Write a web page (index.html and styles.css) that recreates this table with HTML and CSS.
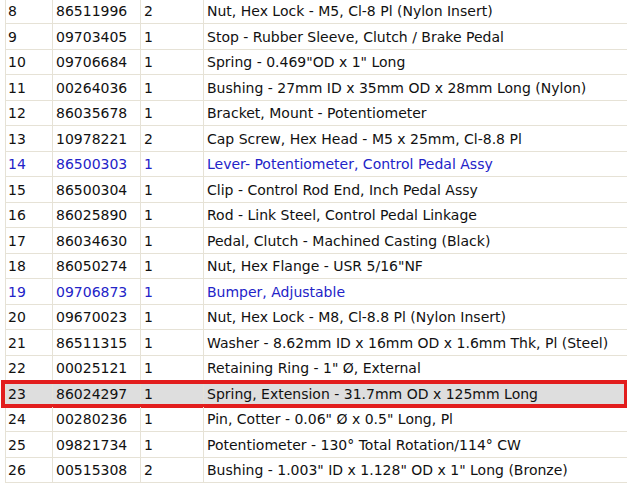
FILE: index.html
```html
<!DOCTYPE html>
<html>
<head>
<meta charset="utf-8">
<link rel="stylesheet" href="styles.css">
</head>
<body>
<div class="parts">
  <div class="row"><div class="c">8</div><div class="c">86511996</div><div class="c">2</div><div class="c">Nut, Hex Lock - M5, Cl-8 Pl (Nylon Insert)</div></div>
  <div class="row"><div class="c">9</div><div class="c">09703405</div><div class="c">1</div><div class="c">Stop - Rubber Sleeve, Clutch / Brake Pedal</div></div>
  <div class="row"><div class="c">10</div><div class="c">09706684</div><div class="c">1</div><div class="c">Spring - 0.469"OD x 1" Long</div></div>
  <div class="row"><div class="c">11</div><div class="c">00264036</div><div class="c">1</div><div class="c">Bushing - 27mm ID x 35mm OD x 28mm Long (Nylon)</div></div>
  <div class="row"><div class="c">12</div><div class="c">86035678</div><div class="c">1</div><div class="c">Bracket, Mount - Potentiometer</div></div>
  <div class="row"><div class="c">13</div><div class="c">10978221</div><div class="c">2</div><div class="c">Cap Screw, Hex Head - M5 x 25mm, Cl-8.8 Pl</div></div>
  <div class="row link"><div class="c">14</div><div class="c">86500303</div><div class="c">1</div><div class="c">Lever- Potentiometer, Control Pedal Assy</div></div>
  <div class="row"><div class="c">15</div><div class="c">86500304</div><div class="c">1</div><div class="c">Clip - Control Rod End, Inch Pedal Assy</div></div>
  <div class="row"><div class="c">16</div><div class="c">86025890</div><div class="c">1</div><div class="c">Rod - Link Steel, Control Pedal Linkage</div></div>
  <div class="row"><div class="c">17</div><div class="c">86034630</div><div class="c">1</div><div class="c">Pedal, Clutch - Machined Casting (Black)</div></div>
  <div class="row"><div class="c">18</div><div class="c">86050274</div><div class="c">1</div><div class="c">Nut, Hex Flange - USR 5/16"NF</div></div>
  <div class="row link"><div class="c">19</div><div class="c">09706873</div><div class="c">1</div><div class="c">Bumper, Adjustable</div></div>
  <div class="row"><div class="c">20</div><div class="c">09670023</div><div class="c">1</div><div class="c">Nut, Hex Lock - M8, Cl-8.8 Pl (Nylon Insert)</div></div>
  <div class="row"><div class="c">21</div><div class="c">86511315</div><div class="c">1</div><div class="c">Washer - 8.62mm ID x 16mm OD x 1.6mm Thk, Pl (Steel)</div></div>
  <div class="row"><div class="c">22</div><div class="c">00025121</div><div class="c">1</div><div class="c">Retaining Ring - 1" Ø, External</div></div>
  <div class="row sel"><div class="c">23</div><div class="c">86024297</div><div class="c">1</div><div class="c">Spring, Extension - 31.7mm OD x 125mm Long</div></div>
  <div class="row"><div class="c">24</div><div class="c">00280236</div><div class="c">1</div><div class="c">Pin, Cotter - 0.06" Ø x 0.5" Long, Pl</div></div>
  <div class="row"><div class="c">25</div><div class="c">09821734</div><div class="c">1</div><div class="c">Potentiometer - 130° Total Rotation/114° CW</div></div>
  <div class="row"><div class="c">26</div><div class="c">00515308</div><div class="c">2</div><div class="c">Bushing - 1.003" ID x 1.128" OD x 1" Long (Bronze)</div></div>
</div>
</body>
</html>
```
FILE: styles.css
```css
html, body {
  margin: 0;
  padding: 0;
  background: #fff;
  overflow: hidden;
}
.parts {
  margin: -1.5px 0 0 5px;
  width: 621px;
  font-family: "DejaVu Sans", Verdana, sans-serif;
  font-size: 14px;
  color: #111;
  border-left: 1px solid #e6e2d6;
}
.row {
  display: grid;
  grid-template-columns: 46px 88px 63px 1fr;
  height: 25.5px;
  box-sizing: border-box;
  border-bottom: 1px solid #e6e2d6;
  position: relative;
}
.c {
  display: flex;
  align-items: center;
  padding: 1px 0 0 3px;
  border-left: 1px solid #e6e2d6;
  white-space: nowrap;
}
.c:first-child {
  border-left: none;
  padding-left: 2px;
}
.link {
  color: #2323c8;
}
.sel {
  background: #dedede;
}
.sel::after {
  content: "";
  position: absolute;
  left: -5px;
  right: -1px;
  top: -1.5px;
  bottom: -2.5px;
  border: 4px solid #e21d1d;
  pointer-events: none;
}
```
